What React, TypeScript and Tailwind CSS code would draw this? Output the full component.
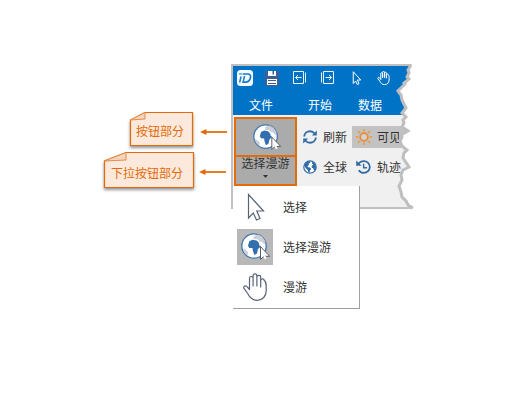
import React from "react";

const TEAR =
  "180,1 177,6 178,9 176,13 178,15 173,19 174,20 171,23 167,27 170,31 171,36 173,40 175,44 171,49 175,53 172,56 173,59 171,63 177,67 170,71 171,73 169,77 171,82 176,86 173,89 172,94 178,103 172,106 170,111 171,116 168,122 170,128 171,133 175,137 177,141 182,144";

function Pointer({ className }: { className: string }) {
  return (
    <svg viewBox="0 0 18 28" className={className} fill="none" strokeLinejoin="miter">
      <path d="M1.5 1.5V25L6.3 20L9.5 27L13 25.5L9.8 18H16.5Z" />
    </svg>
  );
}

function Hand({ className }: { className: string }) {
  return (
    <svg viewBox="0 0 24 28" className={className} fill="none" strokeLinejoin="round" strokeLinecap="round">
      <path d="M6.5 16.5V5.3a1.8 1.8 0 0 1 3.6 0V13M10.1 12V2.7a1.9 1.9 0 0 1 3.8 0V13M13.9 12V4.3a1.9 1.9 0 0 1 3.8 0V14M17.7 13V7.8a1.8 1.8 0 0 1 3.6-.2c2 .6 1.9 3.4 1.9 10.4 0 5-3.5 9.3-9 9.3-5.2 0-8-3.6-9.5-6.8L.8 15.2c-.6-2.2 1.9-3.2 3.2-1.6l2.5 2.9" />
    </svg>
  );
}

function GlobeCursor({ className }: { className: string }) {
  return (
    <svg viewBox="0 0 30 28" className={className}>
      <circle cx="13" cy="13" r="12.2" fill="#fff" stroke="#3c75ad" strokeWidth="1.3" />
      <path d="M12.5 3.2l4.5-1.6 4 2 3.4 4.6-1 3.3-2.2-2.3-2.7-.6-1.8-2.3-4-.2zM1.7 15l3 2 2.3 2-.3 3.5C3.5 20.5 2 18 1.7 15z" fill="#c9cedb" />
      <path d="M8.3 8.2l3.2-1.4 4.1.8 2.2 2.2.6 2.7 1.4.8-2.9 3-.9 4.2-2.6 1.6-1.5-4.2-.4-2.8-3.2-.2-1.3-2.2z" fill="#336fae" />
      <path d="M19.5 13.5v13l3.2-3.2h6z" fill="#fff" stroke="#555d70" strokeWidth="1" />
      <path d="M23.2 22.6l1.4 3.2" stroke="#fff" strokeWidth="2" />
    </svg>
  );
}

function Globe() {
  return (
    <svg viewBox="0 0 14 14" className="size-[14px]">
      <circle cx="7" cy="7" r="6.2" fill="#fff" stroke="#326ba5" strokeWidth="1.2" />
      <path d="M1 5.5L2.5 3 5 1.2l2.4.2-.2 1.4-1.7.9.7 1-1.6 1.4.3 1.1 2.2.3 1.1 1.6-1.3 1.4-.4 2.2-1.3-.4-.5-2.3-1.7-1.5z" fill="#326ba5" />
      <path d="M9.3 1.7l2 1 1.7 3-.2 3-1.6 2-.9-2.3-1.7-1 .2-1.7 1.4-1-1.2-1.2z" fill="#326ba5" />
    </svg>
  );
}

function Refresh() {
  return (
    <svg viewBox="0 0 14 14" className="size-[14px]" fill="none" stroke="#326ba5" strokeWidth="1.9">
      <path d="M1.2 6.5C1.4 3.3 4 1.3 7 1.3c2 0 3.5.8 4.7 2.2M12.8 7.5c-.2 3.2-2.8 5.2-5.8 5.2-2 0-3.5-.8-4.7-2.2" />
      <path d="M13.8 .6v4.9H8.9zM.2 13.4V8.5h4.9z" fill="#326ba5" stroke="none" />
    </svg>
  );
}

function History() {
  return (
    <svg viewBox="0 0 15 14" className="h-[14px] w-[15px]" fill="none" stroke="#326ba5" strokeWidth="1.8">
      <path d="M2.5 3.8C3.8 2 5.6 1.1 7.8 1.1c3.4 0 6 2.6 6 5.9s-2.6 5.9-6 5.9c-2.2 0-4-1-5-2.7" />
      <path d="M7.6 3.8v3.9h3.5" strokeWidth="1.4" />
      <path d="M.2.5v5.3h5.4z" fill="#326ba5" stroke="none" />
    </svg>
  );
}

function Sun() {
  return (
    <svg viewBox="0 0 16 16" className="size-4" fill="none" stroke="#eaa13b" strokeWidth="1.8">
      <circle cx="8" cy="8" r="3.8" stroke="#e88a3a" fill="#d4d2cf" />
      <path d="M8 0v2.4M8 13.6V16M0 8h2.4M13.6 8H16M2.1 2.1l1.8 1.8M12.1 12.1l1.8 1.8M2.1 13.9l1.8-1.8M12.1 3.9l1.8-1.8" />
    </svg>
  );
}

function Logo() {
  return (
    <svg viewBox="0 0 16 16" className="size-4">
      <rect width="16" height="16" rx="3.5" fill="#f8fcff" />
      <path d="M6 4h4.6c2.6 0 3.4 1.7 2.9 3.8-.7 2.9-2.4 4.4-5.1 4.4H5.2" fill="none" stroke="#167bc8" strokeWidth="1.7" />
      <path d="M4.8 6.4L3.5 12.4H1.9l1.3-6zM8.4 6L7 11.4H5.4L6.8 6z" fill="#167bc8" />
      <path d="M2 4h3.5" stroke="#4aa8dd" strokeWidth="1.3" />
    </svg>
  );
}

function Save() {
  return (
    <svg viewBox="0 0 14 15" className="h-[15px] w-[14px]">
      <path d="M0 0h13l1 1v14H0z" fill="#3e5f96" />
      <path d="M3 0h8v5H3zM2 8h10v6H2z" fill="#fff" />
      <path d="M7.5 0H9v3.5H7.5z" fill="#3e5f96" />
      <path d="M3 9.5h8M3 12.5h8" stroke="#3e5f96" />
    </svg>
  );
}

function Step({ className }: { className: string }) {
  return (
    <svg viewBox="0 0 13 13" className={className} fill="none" stroke="#e8f4fc">
      <path d="M.5.5h10v12H.5zM12.5 1.5v10M8.5 6.5h-6M5 4L2.5 6.5 5 9" />
    </svg>
  );
}

function Callout({ w, h, fx, fy, label, place }: { w: number; h: number; fx: number; fy: number; label: string; place: string }) {
  return (
    <div className={place}>
      <svg width={w} height={h} className="absolute inset-0 overflow-visible drop-shadow-[0_2px_1.5px_rgba(60,60,60,0.55)]">
        <path d={`M${fx} .5H${w - 0.5}V${h - 1.5}H.5V${fy}Z`} fill="#fce9dc" stroke="#e36c0a" strokeWidth="1.2" />
        <path d={`M${fx} .5L.5 ${fy}L${fx} ${fy - 1}Z`} fill="#f5d5bd" stroke="#e58b4c" />
      </svg>
      <span className="relative text-[#e36c0a]">{label}</span>
    </div>
  );
}

function Arrow({ className }: { className: string }) {
  return (
    <svg viewBox="0 0 28 8" className={className}>
      <path d="M5 4h22" stroke="#e36c0a" strokeWidth="1.8" />
      <path d="M0 4l6.5-3v6z" fill="#e36c0a" />
    </svg>
  );
}

export default function App() {
  return (
    <div className="relative h-[418px] w-[510px] overflow-hidden bg-white font-['Noto_Sans_CJK_SC',sans-serif] text-[12px] leading-[18px] whitespace-nowrap text-[#333]">
      <Callout w={63} h={35} fx={15} fy={8} label="按钮部分" place="absolute left-[130px] top-[112px] flex h-[35px] w-[63px] items-center pt-[3px] pl-1.5" />
      <Callout w={90} h={37} fx={22} fy={9} label="下拉按钮部分" place="absolute left-[104px] top-[152px] flex h-[37px] w-[90px] items-center pt-[4px] pl-[7px]" />
      <Arrow className="absolute left-[200px] top-[128px] h-2 w-7" />
      <Arrow className="absolute left-[199px] top-[168px] h-2 w-7" />

      <div className="absolute left-[231px] top-[64px] h-[145px] w-[182px]">
        <div className="flex h-[145px] w-[182px] flex-col border-2 border-r-0 border-[#c0c0c0] bg-[#f0f0f0] [clip-path:polygon(0_0,181px_0,177px_6px,178px_9px,176px_13px,178px_15px,173px_19px,174px_20px,171px_23px,167px_27px,170px_31px,171px_36px,173px_40px,175px_44px,171px_49px,175px_53px,172px_56px,173px_59px,171px_63px,177px_67px,170px_71px,171px_73px,169px_77px,171px_82px,176px_86px,173px_89px,172px_94px,178px_103px,172px_106px,170px_111px,171px_116px,168px_122px,170px_128px,171px_133px,175px_137px,177px_141px,182px_145px,0_145px)]">
          <header className="h-[49px] shrink-0 bg-[#0173c7] text-white">
            <div className="flex h-[23px] items-center pl-1">
              <Logo />
              <span className="ml-3 flex pt-px"><Save /></span>
              <Step className="ml-[14px] size-[13px]" />
              <Step className="ml-[15px] size-[13px] -scale-x-100" />
              <Pointer className="ml-[18px] h-[14px] w-[10px] stroke-white stroke-[2]" />
              <Hand className="ml-[15px] h-[14px] w-[13px] stroke-white stroke-[2]" />
            </div>
            <nav className="flex gap-[35px] pt-[7px] pl-4">
              <span>文件</span><span>开始</span><span className="-ml-[9px]">数据</span>
            </nav>
          </header>
          <div className="flex pt-0.5 pl-px">
            <button className="flex h-[69px] w-[63px] shrink-0 flex-col border-2 border-[#e36c0a] bg-[#ababab]">
              <span className="flex h-[38px] w-full shrink-0 items-center justify-center border-b-2 border-[#e36c0a] pl-[3px]">
                <GlobeCursor className="h-[27px] w-[29px]" />
              </span>
              <span className="-mt-px w-full text-center leading-[14px]">选择漫游</span>
              <svg viewBox="0 0 5 3" className="mx-auto mt-[5px] h-[3px] w-[5px]"><path d="M0 0h5L2.5 3z" fill="#333" /></svg>
            </button>
            <div className="ml-[6px] flex flex-col gap-2 pt-[9px]">
              <div className="flex h-[22px] items-center gap-[6px]"><Refresh />刷新</div>
              <div className="flex h-[22px] items-center gap-[6px]"><Globe />全球</div>
            </div>
            <div className="ml-[5px] flex flex-col gap-2 pt-[9px]">
              <div className="flex h-[22px] w-[60px] items-center gap-[5px] bg-[#c2c2c2] pl-1">
                <Sun />
                <span className="w-[22px] overflow-hidden">可见</span>
              </div>
              <div className="flex h-[22px] items-center gap-[6px] pl-1"><History />轨迹</div>
            </div>
          </div>
        </div>
        <svg viewBox="0 0 182 145" className="absolute inset-0 h-[145px] w-[182px] overflow-visible">
          <polyline points={TEAR} fill="none" stroke="#bfbfbf" strokeWidth="3" />
        </svg>
      </div>

      <div className="absolute left-[233px] top-[186px] flex h-[123px] w-[127px] flex-col border-r border-b border-[#a0a0a0] bg-white pt-px pl-1">
        <div className="flex h-10 shrink-0 items-center">
          <span className="flex w-9 pl-[10px]"><Pointer className="h-[28px] w-[18px] stroke-[#596377] stroke-[1.2]" /></span>
          <span className="ml-[10px]">选择</span>
        </div>
        <div className="flex h-10 shrink-0 items-center">
          <span className="flex size-9 items-center justify-center bg-[#b8b8b8] pl-0.5"><GlobeCursor className="h-7 w-[30px]" /></span>
          <span className="ml-[10px]">选择漫游</span>
        </div>
        <div className="flex h-10 shrink-0 items-center">
          <span className="flex w-9 pl-1.5"><Hand className="h-[28px] w-6 stroke-[#596377] stroke-[1.2]" /></span>
          <span className="ml-[10px]">漫游</span>
        </div>
      </div>
    </div>
  );
}
